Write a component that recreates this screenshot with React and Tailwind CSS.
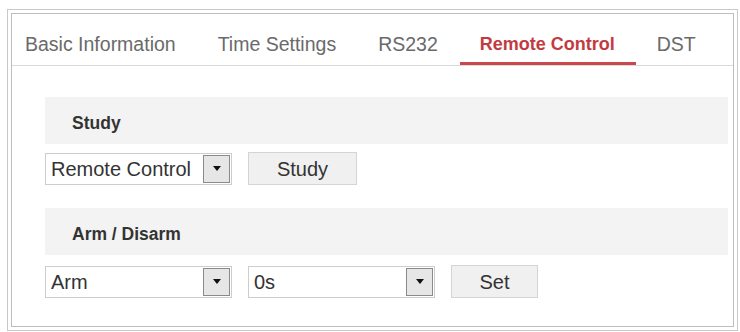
import React from "react";

const tabs = ["Basic Information", "Time Settings", "RS232", "Remote Control", "DST"];

function Select({ value }) {
  return (
    <div className="w-[187px] h-[32px] border border-[#cdcdcd] bg-white flex items-center justify-between pl-[5px] pr-px">
      <span className="text-[20px] leading-none text-[#333]">{value}</span>
      <span className="w-[27px] h-[28px] border border-[#8a8a8a] bg-[#e6e6e6] flex items-center justify-center">
        <svg width="8" height="5" viewBox="0 0 8 5">
          <polygon points="0,0 8,0 4,5" fill="#111" />
        </svg>
      </span>
    </div>
  );
}

function Button({ label, width }) {
  return (
    <button className={`h-[33px] ${width} border border-[#d4d4d4] bg-[#f0f0f0] text-[20px] leading-none text-[#333]`}>
      {label}
    </button>
  );
}

function Band({ title, className = "" }) {
  return (
    <div className={`h-[47px] bg-[#f3f3f3] pl-[27px] pt-[5px] flex items-center ${className}`}>
      <span className="text-[17.5px] font-bold text-[#333]">{title}</span>
    </div>
  );
}

export default function App() {
  return (
    <div className="w-[740px] h-[332px] bg-white pl-[7px] pt-[9px] font-['Liberation_Sans',Arial,sans-serif]">
      <div className="w-[731px] h-[322px] border border-[#c9c9c9] p-[3px]">
        <div className="h-full border border-[#bdbdbd]">
          <div className="h-[52px] border-b border-[#d9d9d9] flex pl-[13px] gap-[42px]">
            {tabs.map((t) => {
              const active = t === "Remote Control";
              return (
                <div key={t} className="relative h-full pt-[19px]">
                  <span
                    className={
                      active
                        ? "text-[18px] leading-[22px] font-bold text-[#c23b41]"
                        : "text-[19.5px] leading-[22px] text-[#6a6a6a]"
                    }
                  >
                    {t}
                  </span>
                  {active && (
                    <span className="absolute bottom-0 -left-5 -right-[21px] h-[3px] bg-[#c9474d]" />
                  )}
                </div>
              );
            })}
          </div>

          <div className="pl-[33px] pr-[5px] pt-[31px]">
            <Band title="Study" />
            <div className="flex items-center gap-4 mt-2">
              <Select value="Remote Control" />
              <Button label="Study" width="w-[109px]" />
            </div>

            <Band title="Arm / Disarm" className="mt-[23px]" />
            <div className="flex items-center gap-4 mt-[10px]">
              <Select value="Arm" />
              <Select value="0s" />
              <Button label="Set" width="w-[87px]" />
            </div>
          </div>
        </div>
      </div>
    </div>
  );
}
